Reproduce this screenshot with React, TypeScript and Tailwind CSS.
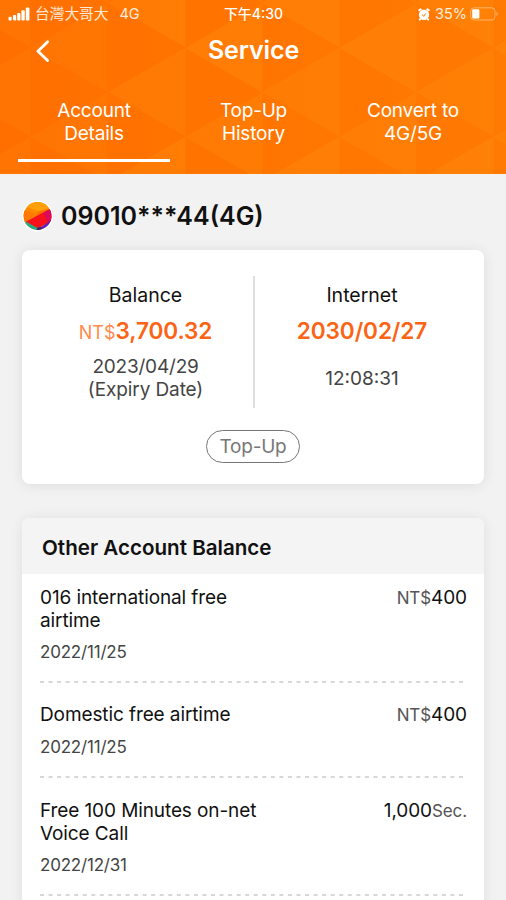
const tabs = [
    { lines: ["Account", "Details"], active: true },
    { lines: ["Top-Up", "History"], active: false },
    { lines: ["Convert to", "4G/5G"], active: false },
]

const balances = [
    { name: ["016 international free", "airtime"], date: "2022/11/25", prefix: "NT$", amount: "400", suffix: "", pad: "pt-3" },
    { name: ["Domestic free airtime"], date: "2022/11/25", prefix: "NT$", amount: "400", suffix: "", pad: "pt-5" },
    { name: ["Free 100 Minutes on-net", "Voice Call"], date: "2022/12/31", prefix: "", amount: "1,000", suffix: "Sec.", pad: "pt-[21px]" },
]

// Columns of the triangle mesh behind the header
const meshColumns = [-47, 30, 108, 185, 262, 339, 416, 493]

function HeaderMesh() {
    return (
        <svg className="absolute inset-0" width="506" height="174" viewBox="0 0 506 174" aria-hidden="true">
            <defs>
                <linearGradient id="base" x1="0" x2="1" y1="0" y2="0">
                    <stop offset="0" stopColor="#ff6f00" />
                    <stop offset="1" stopColor="#ff7a02" />
                </linearGradient>
            </defs>
            <rect width="506" height="174" fill="url(#base)" />
            {meshColumns.map((x, i) => {
                const start = i % 2 === 0 ? -86 : -130
                return [0, 1, 2, 3].map((row) => {
                    const y = start + row * 89
                    return (
                        <polygon
                            key={`${x}-${row}`}
                            points={`${x},${y + 89} ${x + 77.5},${y + 44.5} ${x + 77.5},${y + 133.5}`}
                            fill="#ff9414"
                            opacity={i < 2 ? 0.15 : (i + row) % 2 === 0 ? 0.27 : 0.22}
                        />
                    )
                })
            })}
        </svg>
    )
}

function StatusBar() {
    return (
        <div className="flex h-7 items-center justify-between pl-2 pr-[7px] text-[14px] leading-none text-white/85">
            <div className="flex w-[200px] items-center">
                <svg width="22" height="14" viewBox="0 0 22 14" fill="white">
                    <rect x="0.5" y="9.8" width="3.2" height="3.7" rx="1" />
                    <rect x="5" y="8" width="3.2" height="5.5" rx="1" />
                    <rect x="9.2" y="6" width="3.2" height="7.5" rx="1" />
                    <rect x="13.4" y="3.2" width="3.4" height="10.3" rx="1" />
                    <rect x="17.8" y="0.5" width="3.6" height="13" rx="1" />
                </svg>
                <span className="ml-[5px] text-[14.7px]">台灣大哥大</span>
                <span className="ml-[11px] text-[14.5px]">4G</span>
            </div>
            <div className="font-medium text-white">下午4:30</div>
            <div className="flex w-[200px] items-center justify-end">
                <svg width="12" height="13" viewBox="0 0 12 13" fill="none">
                    <circle cx="6" cy="6.8" r="5.2" fill="white" />
                    <path d="M1.4 2.2 2.6 1.4M10.6 2.2 9.4 1.4M2.2 11.2l-.4.4M9.8 11.2l.4.4" stroke="white" strokeWidth="2" strokeLinecap="round" />
                    <path d="M4 6.6 5.8 8.2 7.8 5.4" stroke="#ff7a00" strokeWidth="1" />
                </svg>
                <span className="ml-[5px] text-[14.5px]">35%</span>
                <svg className="ml-[3px]" width="29" height="14" viewBox="0 0 29 14" fill="none">
                    <rect x="0.7" y="0.8" width="24.3" height="12.2" rx="3.4" stroke="white" strokeOpacity="0.4" />
                    <rect x="2.2" y="2.3" width="7.2" height="9.2" rx="1.2" fill="white" />
                    <path d="M26.5 4.8c1.8.8 1.8 3.4 0 4.2z" fill="white" fillOpacity="0.45" />
                </svg>
            </div>
        </div>
    )
}

function Logo() {
    return (
        <svg width="31" height="32" viewBox="0 0 32 32" aria-hidden="true">
            <defs>
                <clipPath id="disc">
                    <circle cx="16" cy="16" r="14.4" />
                </clipPath>
            </defs>
            <circle cx="16" cy="16" r="16" fill="white" />
            <g clipPath="url(#disc)">
                <rect width="32" height="32" fill="#ff8a00" />
                <path d="M0 0h32v6L17 11 6 7z" fill="#ffa00a" />
                <path d="M0 10 14 13 10 20 3 23z" fill="#ff7800" />
                <path d="M17 11 28 9 12 18z" fill="#ff6f00" />
                <path d="M32 7 4 22 16 29 23 25 32 22z" fill="#f8101a" />
                <path d="M32 7 22 13 27 23 32 22z" fill="#dc0a5c" />
                <path d="M0 20 4 22 16 28.5 16 32H0z" fill="#1fae85" />
                <path d="M32 19 25 24 20 27 16 28.5V32H32z" fill="#5a1ed0" />
                <path d="M16 28 20 27 21 32H14z" fill="#3b2a63" />
            </g>
        </svg>
    )
}

export default function App() {
    return (
        <div className="h-[900px] w-[506px] overflow-hidden bg-[#f2f2f2] font-['Inter','Noto_Sans_CJK_TC',sans-serif] text-[#111]">
            {/* Header */}
            <header className="relative h-[174px] overflow-hidden bg-[#ff7600] text-white">
                <HeaderMesh />
                <div className="relative">
                    <StatusBar />
                    <div className="grid h-[46px] grid-cols-[60px_1fr_60px] items-center">
                        <button type="button" aria-label="Back" className="pl-[35px]">
                            <svg width="16" height="22" viewBox="0 0 16 22" fill="none">
                                <path d="M12.6 1.8 3 11.2l9.6 9.4" stroke="white" strokeWidth="2.8" strokeLinecap="round" strokeLinejoin="round" />
                            </svg>
                        </button>
                        <h1 className="pl-px text-center text-[25px] font-semibold tracking-[-0.1px]">Service</h1>
                    </div>
                    <nav className="mt-6 flex justify-between pr-[17px] pl-[18px]">
                        {tabs.map((tab) => (
                            <button
                                key={tab.lines[0]}
                                type="button"
                                className={`h-[64px] w-[152px] border-b-3 pb-[14px] text-center text-[19px] leading-[23px] tracking-[-0.2px] ${tab.active ? "border-white" : "border-transparent"
                                    }`}
                            >
                                {tab.lines.map((line) => (
                                    <span key={line} className="block">{line}</span>
                                ))}
                            </button>
                        ))}
                    </nav>
                </div>
            </header>

            <main className="px-[22px]">
                {/* Phone number */}
                <div className="flex items-center gap-2 pt-[26px]">
                    <Logo />
                    <h2 className="text-[25px] leading-8 font-semibold">09010***44(4G)</h2>
                </div>

                {/* Balance card */}
                <section className="mt-[18px] h-[234px] rounded-lg bg-white pt-[26px] shadow-[0_1px_14px_rgba(0,0,0,0.09)]">
                    <div className="grid h-[132px] grid-cols-[233px_1fr] text-center">
                        <div className="border-r-2 border-[#dedede] pt-[7px] pl-[16px]">
                            <p className="text-[19.5px] leading-[24px]">Balance</p>
                            <p className="mt-[9px] text-[22.6px] leading-[30px] font-semibold tracking-[-0.1px] text-[#fa6414]">
                                <span className="text-[18px] font-normal tracking-normal text-[#ff8a4a]">NT$</span>3,700.32
                            </p>
                            <p className="mt-[7px] text-[19px] leading-[23px] tracking-[-0.2px] text-[#444]">2023/04/29</p>
                            <p className="text-[19px] leading-[23px] tracking-[-0.1px] text-[#444]">(Expiry Date)</p>
                        </div>
                        <div className="pt-[7px] pr-[15px]">
                            <p className="text-[19.5px] leading-[24px]">Internet</p>
                            <p className="mt-[9px] text-[22.6px] leading-[30px] font-semibold tracking-[-0.1px] text-[#fa6414]">2030/02/27</p>
                            <p className="mt-[21px] text-[19px] leading-[23px] text-[#444]">12:08:31</p>
                        </div>
                    </div>
                    <div className="mt-[22px] flex justify-center">
                        <button type="button" className="h-[33px] w-[94px] rounded-full border border-[#777] text-[19px] leading-[31px] tracking-[-0.2px] text-[#777]">
                            Top-Up
                        </button>
                    </div>
                </section>

                {/* Other balances */}
                <section className="mt-[34px] h-[400px] overflow-hidden rounded-t-lg bg-white shadow-[0_1px_14px_rgba(0,0,0,0.08)]">
                    <h3 className="h-14 bg-[#f4f4f4] pl-5 text-[20.6px] leading-[60px] font-semibold">Other Account Balance</h3>
                    <ul>
                        {balances.map((item) => (
                            <li key={item.name[0]} className={`pr-[17px] pl-[18px] ${item.pad}`}>
                                <div className="flex justify-between text-[19px] leading-[23px] tracking-[-0.1px]">
                                    <div>
                                        {item.name.map((line) => (
                                            <p key={line}>{line}</p>
                                        ))}
                                    </div>
                                    <p>
                                        <span className="text-[17px] text-[#555]">{item.prefix}</span>
                                        {item.amount}
                                        <span className="text-[17px] text-[#555]">{item.suffix}</span>
                                    </p>
                                </div>
                                <p className="mt-[9px] text-[17px] leading-[22px] tracking-[-0.2px] text-[#444]">{item.date}</p>
                                <svg className="mt-[18px] block" width="426" height="2" aria-hidden="true">
                                    <line x1="0" x2="424" y1="1" y2="1" stroke="#d8d8d8" strokeWidth="2" strokeDasharray="4 4.55" />
                                </svg>
                            </li>
                        ))}
                    </ul>
                </section>
            </main>
        </div>
    )
}
